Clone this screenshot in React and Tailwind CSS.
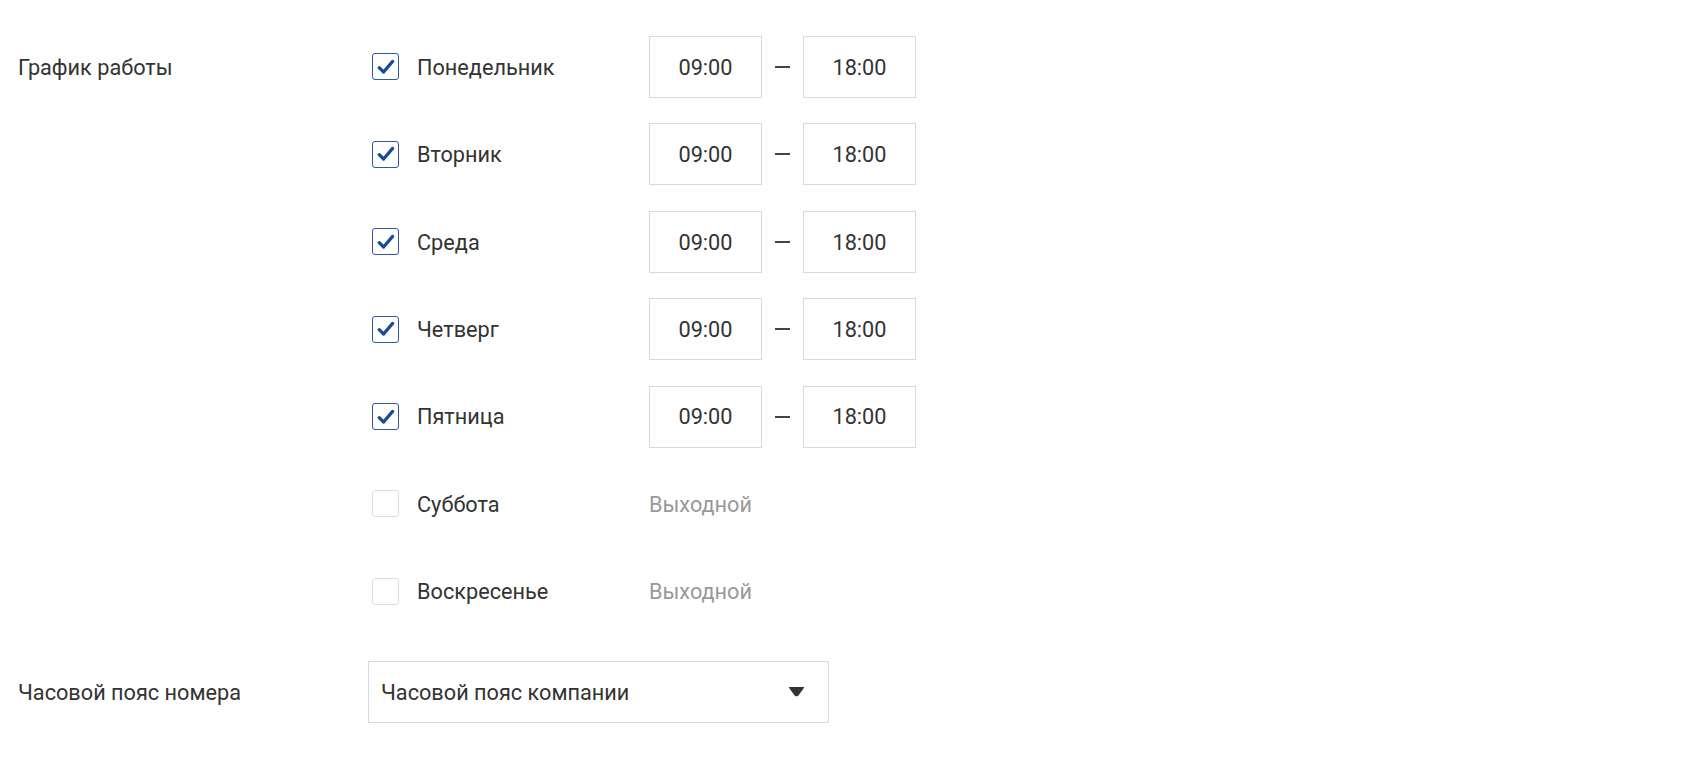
import React, { useState } from 'react';

const DAYS = [
    { name: 'Понедельник', on: true },
    { name: 'Вторник', on: true },
    { name: 'Среда', on: true },
    { name: 'Четверг', on: true },
    { name: 'Пятница', on: true },
    { name: 'Суббота', on: false },
    { name: 'Воскресенье', on: false },
];

const Checkbox = ({ checked, onChange }) => (
    <button
        onClick={onChange}
        className={`ml-[4px] w-[27px] h-[27px] shrink-0 rounded-[3px] border flex items-center justify-center bg-white ${checked ? 'border-[#2a5aa6]' : 'border-[#dcdcdc]'}`}
    >
        {checked && (
            <svg width="18" height="16" viewBox="0 0 18 16" fill="none">
                <path d="M2.2 8.6 L6.6 13 L15.6 2.4" stroke="#174a97" strokeWidth="3.2" strokeLinecap="round" strokeLinejoin="round" />
            </svg>
        )}
    </button>
);

const TimeBox = ({ value }) => (
    <div className="w-[113px] h-[62px] border border-[#d9d9d9] flex items-center justify-center pt-[2px] text-[21.7px] text-[#333]">
        {value}
    </div>
);

const App = () => {
    const [days, setDays] = useState(DAYS);

    const toggle = (i) => {
        setDays(days.map((d, j) => (j === i ? { ...d, on: !d.on } : d)));
    };

    return (
        <div className="pl-[18px] pt-[36px] bg-white min-h-screen text-[#333]" style={{ fontFamily: 'Roboto, "Noto Sans", sans-serif' }}>
            {/* Schedule */}
            <div className="flex">
                <div className="w-[350px] h-[62px] flex items-center pt-[2px] text-[21.7px]">График работы</div>
                <div className="flex flex-col gap-[25.4px]">
                    {days.map((d, i) => (
                        <div key={d.name} className="flex items-center h-[62px]">
                            <div className="w-[281px] flex items-center">
                                <Checkbox checked={d.on} onChange={() => toggle(i)} />
                                <span className="ml-[18px] pt-[2px] text-[21.7px]">{d.name}</span>
                            </div>
                            {d.on ? (
                                <div className="flex items-center">
                                    <TimeBox value="09:00" />
                                    <div className="w-[41px] flex justify-center">
                                        <div className="w-[15px] h-[2px] bg-[#444]"></div>
                                    </div>
                                    <TimeBox value="18:00" />
                                </div>
                            ) : (
                                <span className="pt-[2px] text-[21.7px] text-[#999]">Выходной</span>
                            )}
                        </div>
                    ))}
                </div>
            </div>

            {/* Timezone */}
            <div className="flex mt-[38.6px]">
                <div className="w-[350px] h-[62px] flex items-center pt-[2px] text-[21.7px]">Часовой пояс номера</div>
                <div className="w-[461px] h-[62px] border border-[#d9d9d9] flex items-center justify-between pl-[12px] pr-[23px] text-[21.7px]">
                    <span className="pt-[2px]">Часовой пояс компании</span>
                    <svg width="17" height="11" viewBox="0 0 17 11">
                        <path d="M1.5 1.5 H15.5 Q11 8 9.8 9.2 Q8.5 10.3 7.2 9.2 Q6 8 1.5 1.5 Z" fill="#333" stroke="#333" strokeWidth="1.2" strokeLinejoin="round" />
                    </svg>
                </div>
            </div>
        </div>
    );
};

export default App;
